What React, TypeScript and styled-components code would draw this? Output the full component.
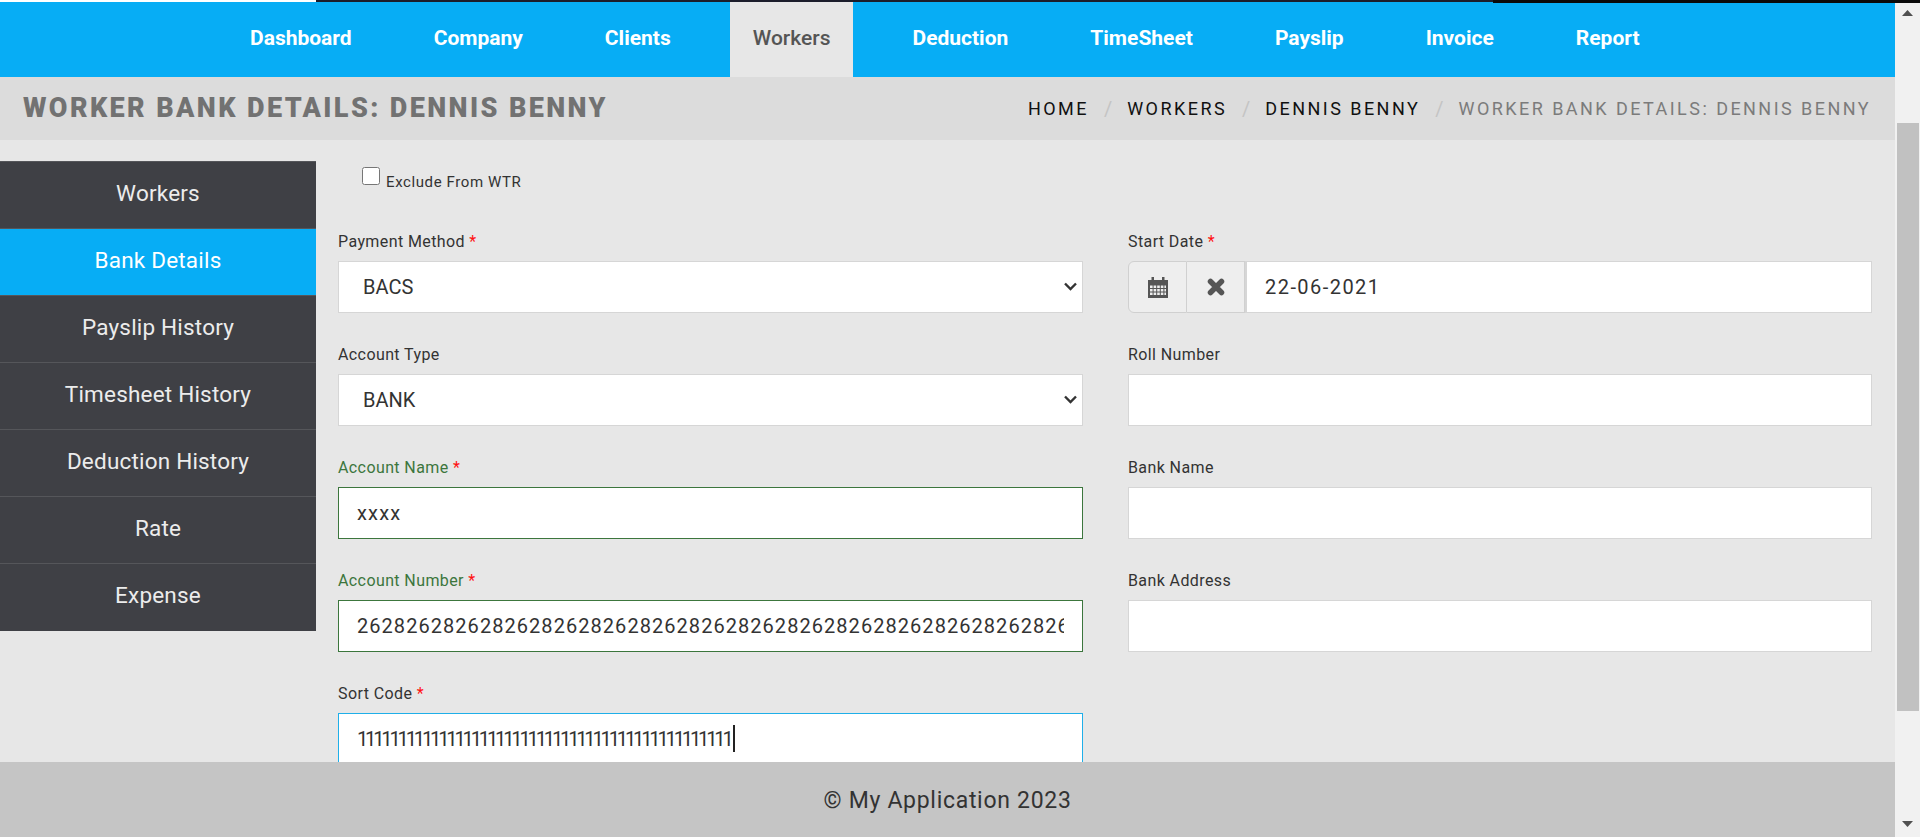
import React from "react";
import styled, { createGlobalStyle } from "styled-components";

const Global = createGlobalStyle`
  html, body { margin: 0; padding: 0; height: 100%; overflow: hidden; background: #e7e7e7; }
  #root { height: 837px; }
  * { box-sizing: border-box; }
`;

const font = `Roboto, "Liberation Sans", sans-serif`;

const Page = styled.div`
  position: relative;
  display: flex;
  height: 837px;
  font-family: ${font};
  color: #333;
`;
const Column = styled.div`
  flex: 1;
  min-width: 0;
  display: flex;
  flex-direction: column;
  height: 837px;
`;
const TopStrip = styled.div`
  position: absolute;
  top: 0; left: 0; right: 0;
  height: 3px;
  display: flex;
  z-index: 3;
  pointer-events: none;
`;
const StripPart = styled.div<{ $w?: number; $h: number; $c: string }>`
  ${(p) => (p.$w ? `width: ${p.$w}px;` : "flex: 1;")}
  height: ${(p) => p.$h}px;
  background: ${(p) => p.$c};
`;
const Nav = styled.nav`
  height: 77px;
  padding: 2px 0 0 209px;
  background: #07adf5;
  display: flex;
  flex: none;
`;
const NavItem = styled.a<{ $active?: boolean }>`
  margin: 0 18px;
  padding: 0 23px 3px;
  display: flex;
  align-items: center;
  font-size: 21px;
  background: ${(p) => (p.$active ? "#e7e7e7" : "transparent")};
  color: ${(p) => (p.$active ? "#555" : "#fff")};
  font-weight: ${(p) => (p.$active ? 500 : 700)};
`;
const SubHeader = styled.header`
  height: 63px;
  flex: none;
  background: #dcdcdc;
  display: flex;
  align-items: center;
  justify-content: space-between;
  padding: 0 24px 0 23px;
`;
const Title = styled.h1`
  margin: 0 0 2px;
  font-size: 27px;
  font-weight: 900;
  letter-spacing: 2.4px;
  color: #727272;
`;
const Crumbs = styled.ol`
  margin: 0;
  padding: 0;
  list-style: none;
  display: flex;
  align-items: center;
  font-size: 18px;
  letter-spacing: 2.45px;
  color: #111;
`;
const Crumb = styled.li<{ $current?: boolean }>`
  color: ${(p) => (p.$current ? "#7b7b7b" : "#111")};
`;
const Slash = styled.li`
  color: #c4c4c4;
  margin: 0 15px;
  font-size: 20px;
  letter-spacing: 0;
`;
const Middle = styled.div`
  flex: 1;
  min-height: 0;
  overflow: hidden;
  display: flex;
  align-items: flex-start;
  background: #e7e7e7;
`;
const Side = styled.aside`
  width: 316px;
  flex: none;
  margin-top: 21px;
  padding-bottom: 1px;
  background: #3f4045;
`;
const SideItem = styled.a<{ $active?: boolean }>`
  display: flex;
  align-items: center;
  justify-content: center;
  height: 67px;
  border-top: 1px solid #55565a;
  font-size: 22.5px;
  letter-spacing: 0.2px;
  padding-bottom: 5px;
  color: ${(p) => (p.$active ? "#fff" : "#ececec")};
  background: ${(p) => (p.$active ? "#07adf5" : "transparent")};
`;
const FormArea = styled.form`
  flex: 1;
  min-width: 0;
  padding: 27px 23px 0 22px;
`;
const CheckRow = styled.label`
  display: flex;
  align-items: flex-start;
  padding-left: 24px;
  height: 47px;
  font-size: 15px;
  color: #333;
`;
const Check = styled.input`
  margin: 0 6px 0 0;
  width: 18px;
  height: 18px;
`;
const CheckText = styled.span`
  margin-top: 6px;
  letter-spacing: 0.6px;
`;
const Grid = styled.div`
  display: grid;
  grid-template-columns: 745px 744px;
  column-gap: 45px;
  row-gap: 27px;
  margin-top: 13px;
`;
const Field = styled.div`
  position: relative;
  height: 86px;
`;
const Label = styled.label<{ $ok?: boolean }>`
  display: block;
  height: 34px;
  padding-top: 5px;
  font-size: 16px;
  letter-spacing: 0.4px;
  color: ${(p) => (p.$ok ? "#3c763d" : "#333")};
`;
const Req = styled.span`
  color: #f11;
`;
const SelectBox = styled.div`
  position: relative;
  height: 52px;
`;
const Select = styled.select`
  display: block;
  width: 100%;
  height: 52px;
  appearance: none;
  border: 1px solid #d6d6d6;
  background: #fff;
  padding: 0 12px 0 24px;
  font: 400 20px ${font};
  color: #333;
  outline: none;
  border-radius: 0;
`;
const Chevron = styled.svg`
  position: absolute;
  right: 6px;
  top: 21px;
  pointer-events: none;
`;
const Input = styled.input<{ $state?: "ok" | "focus" }>`
  display: block;
  width: 100%;
  height: 52px;
  padding: 0 18px;
  background: #fff;
  font: 400 20px ${font};
  color: #333;
  outline: none;
  border-radius: 0;
  border: 1px solid
    ${(p) => (p.$state === "ok" ? "#3c763d" : p.$state === "focus" ? "#1fafe9" : "#d6d6d6")};
`;
const NameInput = styled(Input)`
  letter-spacing: 1.2px;
`;
const DigitsInput = styled(Input)`
  letter-spacing: 1.05px;
`;
const OnesInput = styled(Input)`
  letter-spacing: -3.12px;
`;
const Caret = styled.span`
  position: absolute;
  left: 395px;
  top: 46px;
  width: 1.5px;
  height: 27px;
  background: #222;
`;
const Group = styled.div`
  display: flex;
  height: 52px;
`;
const Addon = styled.span<{ $first?: boolean }>`
  width: ${(p) => (p.$first ? 59 : 58)}px;
  flex: none;
  display: flex;
  align-items: center;
  justify-content: center;
  background: #eee;
  color: #555;
  border: 1px solid #d0d0d0;
  border-left-width: ${(p) => (p.$first ? 1 : 0)}px;
  border-radius: ${(p) => (p.$first ? "6px 0 0 6px" : "0")};
`;
const DateInput = styled(Input)`
  flex: 1;
  width: auto;
  border-left-width: 2px;
  letter-spacing: 1.45px;
`;
const Footer = styled.footer`
  position: relative;
  z-index: 2;
  flex: none;
  height: 75px;
  padding-top: 1px;
  background: #c5c5c5;
  display: flex;
  align-items: center;
  justify-content: center;
  font-size: 23px;
  letter-spacing: 0.7px;
  color: #333;
`;
const Scrollbar = styled.div`
  width: 25px;
  flex: none;
  background: #f1f1f1;
  position: relative;
`;
const Thumb = styled.div`
  position: absolute;
  left: 2px;
  right: 1px;
  top: 123px;
  height: 588px;
  background: #c1c1c1;
`;
const ArrowUp = styled.svg`
  position: absolute;
  left: 7px;
  top: 10px;
`;
const ArrowDown = styled.svg`
  position: absolute;
  left: 7px;
  top: 821px;
`;

const CalendarIcon = () => (
  <svg width="20" height="21" viewBox="0 0 20 21" fill="#555">
    <path d="M3.500 0h2.500v3h-2.500zM14 0h2.500v3H14z" />
    <path fillRule="evenodd" d="M0 3h20v18H0zM2 8.500v2.500h2.600V8.500zM5.600 8.500v2.500h2.600V8.500zM9.200 8.500v2.500h2.600V8.500zM12.800 8.500v2.500h2.600V8.500zM16.400 8.500v2.500H18V8.500zM2 12v2.500h2.600V12zM5.600 12v2.500h2.600V12zM9.200 12v2.500h2.600V12zM12.800 12v2.500h2.600V12zM16.400 12v2.500H18V12zM2 15.500V18h2.600v-2.500zM5.600 15.500V18h2.600v-2.500zM9.200 15.500V18h2.600v-2.500zM12.800 15.500V18h2.600v-2.500zM16.400 15.500V18H18v-2.500z" />
  </svg>
);

const CloseIcon = () => (
  <svg width="18" height="18" viewBox="0 0 18 18" stroke="#555" strokeWidth="5.500" strokeLinecap="round">
    <path d="M3.500 3.500l11 11M14.500 3.500l-11 11" />
  </svg>
);

const SelectChevron = () => (
  <Chevron width="13" height="9" viewBox="0 0 13 9" fill="none" stroke="#333" strokeWidth="2.400">
    <path d="M1 1.500l5.500 5.500 5.500-5.500" />
  </Chevron>
);

const navItems = ["Dashboard", "Company", "Clients", "Workers", "Deduction", "TimeSheet", "Payslip", "Invoice", "Report"];
const sideItems = ["Workers", "Bank Details", "Payslip History", "Timesheet History", "Deduction History", "Rate", "Expense"];

export default function App() {
  return (
    <>
      <Global />
      <Page>
        <TopStrip>
          <StripPart $w={316} $h={2} $c="#fff" />
          <StripPart $w={1177} $h={2} $c="#1c1d2b" />
          <StripPart $h={3} $c="#0a0a0a" />
        </TopStrip>
        <Column>
          <Nav>
            {navItems.map((n) => (
              <NavItem key={n} $active={n === "Workers"}>{n}</NavItem>
            ))}
          </Nav>
          <SubHeader>
            <Title>WORKER BANK DETAILS: DENNIS BENNY</Title>
            <Crumbs>
              <Crumb>HOME</Crumb><Slash>/</Slash>
              <Crumb>WORKERS</Crumb><Slash>/</Slash>
              <Crumb>DENNIS BENNY</Crumb><Slash>/</Slash>
              <Crumb $current>WORKER BANK DETAILS: DENNIS BENNY</Crumb>
            </Crumbs>
          </SubHeader>
          <Middle>
            <Side>
              {sideItems.map((s) => (
                <SideItem key={s} $active={s === "Bank Details"}>{s}</SideItem>
              ))}
            </Side>
            <FormArea>
              <CheckRow>
                <Check type="checkbox" />
                <CheckText>Exclude From WTR</CheckText>
              </CheckRow>
              <Grid>
                <Field>
                  <Label>Payment Method <Req>*</Req></Label>
                  <SelectBox>
                    <Select defaultValue="BACS"><option>BACS</option></Select>
                    <SelectChevron />
                  </SelectBox>
                </Field>
                <Field>
                  <Label>Start Date <Req>*</Req></Label>
                  <Group>
                    <Addon $first><CalendarIcon /></Addon>
                    <Addon><CloseIcon /></Addon>
                    <DateInput readOnly value="22-06-2021" />
                  </Group>
                </Field>
                <Field>
                  <Label>Account Type</Label>
                  <SelectBox>
                    <Select defaultValue="BANK"><option>BANK</option></Select>
                    <SelectChevron />
                  </SelectBox>
                </Field>
                <Field>
                  <Label>Roll Number</Label>
                  <Input readOnly value="" />
                </Field>
                <Field>
                  <Label $ok>Account Name <Req>*</Req></Label>
                  <NameInput $state="ok" readOnly value="xxxx" />
                </Field>
                <Field>
                  <Label>Bank Name</Label>
                  <Input readOnly value="" />
                </Field>
                <Field>
                  <Label $ok>Account Number <Req>*</Req></Label>
                  <DigitsInput $state="ok" readOnly value={"2628".repeat(16)} />
                </Field>
                <Field>
                  <Label>Bank Address</Label>
                  <Input readOnly value="" />
                </Field>
                <Field>
                  <Label>Sort Code <Req>*</Req></Label>
                  <OnesInput $state="focus" readOnly value={"1".repeat(46)} />
                  <Caret />
                </Field>
              </Grid>
            </FormArea>
          </Middle>
          <Footer>© My Application 2023</Footer>
        </Column>
        <Scrollbar>
          <ArrowUp width="11" height="6" viewBox="0 0 11 6" fill="#505050"><path d="M5.500 0L11 6H0z" /></ArrowUp>
          <Thumb />
          <ArrowDown width="11" height="6" viewBox="0 0 11 6" fill="#505050"><path d="M0 0h11L5.500 6z" /></ArrowDown>
        </Scrollbar>
      </Page>
    </>
  );
}
